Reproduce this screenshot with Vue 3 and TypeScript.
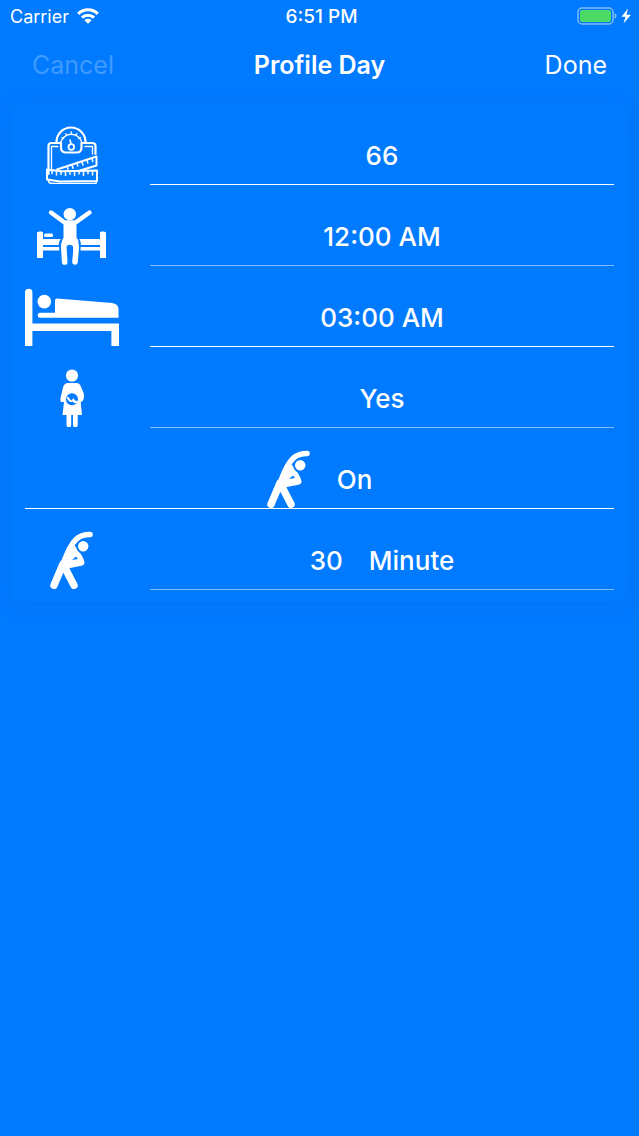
<script setup lang="ts">
import { ref } from 'vue'

const weight = ref('66')
const wakeTime = ref('12:00 AM')
const sleepTime = ref('03:00 AM')
const pregnant = ref('Yes')
const active = ref(true)
const duration = ref(30)
</script>

<template>
  <div class="screen">
    <div class="status">
      <div class="carrier">
        <span>Carrier</span>
        <svg class="wifi" viewBox="0 0 22 16" aria-hidden="true">
          <g fill="none" stroke="#fff" stroke-width="3.1">
            <path d="M1.2 5.8a14 14 0 0 1 19.6 0" />
            <path d="M4.9 9.7a8.7 8.7 0 0 1 12.2 0" />
          </g>
          <path d="M7.4 12.2a5.1 5.1 0 0 1 7.2 0L11 15.800z" fill="#fff" />
        </svg>
      </div>
      <div class="time">6:51 PM</div>
      <div class="power">
        <svg class="battery" viewBox="0 0 56 18" aria-hidden="true">
          <rect x="1" y="1" width="35" height="16" rx="4" fill="none" stroke="#fff" stroke-opacity=".5" stroke-width="1.4" />
          <rect x="3" y="3" width="31" height="12" rx="2" fill="#4cd964" />
          <path d="M37.500 6.200q2 .8 2 2.800t-2 2.800z" fill="#fff" fill-opacity=".5" />
          <path d="M51 1.500 44.500 9.800H48.500L46.500 16.500 54 7.800H49.500z" fill="#fff" />
        </svg>
      </div>
    </div>

    <header class="nav">
      <button type="button" class="nav-btn" disabled>Cancel</button>
      <h1>Profile Day</h1>
      <button type="button" class="nav-btn done">Done</button>
    </header>

    <main class="card">
      <div class="row">
        <label class="icon" for="weight" aria-label="Weight">
          <svg class="pic" viewBox="0 0 94 58" aria-hidden="true">
            <g fill="none" stroke="#fff" stroke-linejoin="round" stroke-linecap="round">
              <path d="M31.500 17V16a14.500 14.500 0 0 1 29 0v1" stroke-width="2.200" />
              <path d="M35.500 17a11 11 0 0 1 21.500 0" stroke-width="1.500" />
              <path d="M46.200 5.500v2.500M40.500 7.500l1.200 2M51.900 7.500l-1.200 2M36.800 11.500l2 1.200M55.600 11.500l-2 1.200" stroke-width="1.200" />
              <path d="M23.500 48V20q0-3 3-3H36v4.500q0 5 5 5h10.500q5 0 5-5V17H67q3.500 0 3.500 3v8" stroke-width="2.200" />
              <path d="M26.500 45V20.500H33M60 20.500h7.500V28" stroke-width="1.300" />
              <circle cx="46.300" cy="21" r="2.800" stroke-width="1.800" />
              <path d="M46 18l-1-4" stroke-width="1.600" />
              <path d="M32 43.500 71.500 30.500v9L55 44.500" stroke-width="2" />
              <path d="M42 40.500l1 2.800M47 39l1 3.200M52 37.300l.8 2.800M57 35.700l1 3.300M62 34l.8 3M67 32.500l.8 3" stroke-width="1.500" />
              <path d="M22 43.500 36 45.300 72 44.500v10.500L35 55.500 22 53.500z" stroke-width="2" />
              <path d="M27 44.500v3M31.500 45v4M36 45.500v3M40.500 45.300v4.200M45 45.200v3M49.500 45v4.500M54 45v3M58.500 44.900v4.500M63 44.800v3M67.500 44.700v4.300" stroke-width="1.500" />
              <path d="M23.500 54.500q0 3 4 3H71v-2" stroke-width="1.600" />
            </g>
          </svg>
        </label>
        <input id="weight" v-model="weight" class="field" type="text" inputmode="numeric" />
      </div>

      <div class="row">
        <label class="icon" for="wake" aria-label="Wake-up time">
          <svg class="pic" viewBox="0 0 94 58" aria-hidden="true">
            <g fill="#fff">
              <path d="M12 26q0-1 1-1h.5V24.500H17V25h1v7h19v6H18v2H38V43.500H18V51H12z" />
              <path d="M81 26q0-1-1-1h-.5V24.500H76V25h-1v7H53v6h22v2H53v3.500h22V51h6z" />
              <rect x="19" y="26.500" width="9" height="3.500" rx="1.500" />
            </g>
            <path d="M39 14h12.500v17q3 2 3.200 6L53.500 54h-6L47 40q-2.500-2-5 0L42.500 54h-6L35 37q.2-4 4-6z" fill="#fff" stroke="#007aff" stroke-width="2.400" />
            <g fill="none" stroke="#fff" stroke-width="5.600" stroke-linecap="round" stroke-linejoin="round">
              <path d="M40.500 36.500Q38.500 38 38.800 41L39.700 55M49.500 36.500Q51.500 38 51.200 41L50 55" />
              <path d="M26 5.500 39.500 15.500h11L64.500 5.500" stroke-width="4.400" />
            </g>
            <path d="M38.500 14h13v17q2 1 2 5H37q0-4 1.500-5z" fill="#fff" />
            <circle cx="44.800" cy="7.200" r="6.200" fill="#fff" />
          </svg>
        </label>
        <input id="wake" v-model="wakeTime" class="field" type="text" />
      </div>

      <div class="row">
        <label class="icon" for="sleep" aria-label="Bedtime">
          <svg class="pic" viewBox="0 0 94 58" aria-hidden="true">
            <g fill="#fff">
              <path d="M0 58V4.500a3.700 3.700 0 0 1 7.400 0v31H94V58h-7.600V43H7.400v15z" />
              <circle cx="19.300" cy="13.600" r="6.800" />
              <path d="M30 24.700V12.500q0-2.200 2.200-2L87 15.100q6.500.6 6.500 6.400v8.200H15.200a2.500 2.500 0 0 1 0-5z" />
            </g>
          </svg>
        </label>
        <input id="sleep" v-model="sleepTime" class="field" type="text" />
      </div>

      <div class="row">
        <label class="icon" for="pregnant" aria-label="Pregnant">
          <svg class="pic" viewBox="0 0 94 58" aria-hidden="true">
            <g fill="#fff">
              <circle cx="47" cy="6.600" r="6.100" />
              <path d="M43 14h8.500q3 0 4.200 3l3 7.500q1 4.500-1 7.500l-2 1 1.300 13h-4.300v10a2.300 2.300 0 0 1-4.700 0V46h-1.800v10a2.300 2.300 0 0 1-4.700 0V46h-4l1.500-13h-3q-1-2-.3-5l2.300-9.500Q39 14 43 14z" />
            </g>
            <circle cx="47" cy="30.300" r="6" fill="#007aff" />
            <path d="M41.500 28q2-1 3 1.500t2.500 1.500l1.500-2 1.500 2.500 2.500.5.500 1.500q-2.500 1.500-4.500 0l-1-1q-3 1.500-4.500-1.500z" fill="#fff" />
          </svg>
        </label>
        <input id="pregnant" v-model="pregnant" class="field" type="text" />
      </div>

      <button type="button" class="row toggle" :aria-pressed="active" @click="active = !active">
        <svg class="stretch" viewBox="0 0 44 58" aria-hidden="true">
          <g fill="none" stroke="#fff" stroke-linecap="round" stroke-linejoin="round">
            <path d="M40 3.500Q31 3.500 26 8.500Q20 14 13.500 32" stroke-width="5.600" />
            <path d="M13 33 4 54.300M13.500 34l10.500 20.300" stroke-width="7.400" />
          </g>
          <path d="M19 16Q22 12 25.500 15.500Q27 20 30.500 22.500Q34 28 34.500 31.500Q34.500 34 31.500 34.700L20 37 12.500 42 11 33z" fill="#fff" />
          <path d="M22 29 26 25.500l2 2.500z" fill="#007aff" />
          <circle cx="33" cy="15.200" r="6.200" fill="#007aff" />
          <circle cx="33.200" cy="15.200" r="5.200" fill="#fff" />
        </svg>
        <span>{{ active ? 'On' : 'Off' }}</span>
      </button>

      <div class="row">
        <div class="icon">
          <svg class="stretch" viewBox="0 0 44 58" aria-hidden="true">
            <g fill="none" stroke="#fff" stroke-linecap="round" stroke-linejoin="round">
              <path d="M40 3.500Q31 3.500 26 8.500Q20 14 13.500 32" stroke-width="5.600" />
              <path d="M13 33 4 54.300M13.500 34l10.500 20.300" stroke-width="7.400" />
            </g>
            <path d="M19 16Q22 12 25.500 15.500Q27 20 30.500 22.500Q34 28 34.500 31.500Q34.500 34 31.500 34.700L20 37 12.500 42 11 33z" fill="#fff" />
            <path d="M22 29 26 25.500l2 2.500z" fill="#007aff" />
            <circle cx="33" cy="15.200" r="6.200" fill="#007aff" />
            <circle cx="33.200" cy="15.200" r="5.200" fill="#fff" />
          </svg>
        </div>
        <button type="button" class="field duration">
          <span>{{ duration }}</span>
          <span>Minute</span>
        </button>
      </div>
    </main>
  </div>
</template>

<style>
html,
body {
  background: #007aff;
}

body {
  margin: 0;
}
</style>

<style scoped>
.screen {
  min-height: 100vh;
  background: #007aff;
  color: #fff;
  font-family: Inter, "Liberation Sans", sans-serif;
}

.status {
  display: grid;
  grid-template-columns: 1fr auto 1fr;
  align-items: center;
  height: 32px;
  padding: 0 6px 0 10px;
  font-size: 18px;
}

.carrier {
  display: flex;
  align-items: center;
  gap: 8px;
}

.wifi {
  width: 22px;
  height: 16px;
}

.time {
  font-size: 19px;
  font-weight: 500;
}

.power {
  display: flex;
  justify-content: flex-end;
}

.battery {
  width: 56px;
  height: 18px;
}

.nav {
  display: grid;
  grid-template-columns: 1fr auto 1fr;
  align-items: center;
  height: 66px;
  padding: 0 32px;
}

.nav h1 {
  margin: 0;
  font-size: 25px;
  font-weight: 600;
}

.nav-btn {
  justify-self: start;
  padding: 0;
  border: 0;
  background: none;
  color: #fff;
  font: inherit;
  font-size: 25px;
}

.nav-btn:disabled {
  color: #3f9bff;
}

.done {
  justify-self: end;
}

.card {
  display: flex;
  flex-direction: column;
  gap: 22px;
  margin: 6px 12px 0;
  padding: 22px 13px 12px;
  border-radius: 8px;
  box-shadow: 0 4px 20px rgba(0, 80, 200, 0.12);
}

.row {
  display: flex;
  gap: 31px;
  height: 59px;
}

.icon {
  display: flex;
  flex: none;
  justify-content: center;
  width: 94px;
}

.pic {
  width: 94px;
  height: 58px;
}

.stretch {
  width: 44px;
  height: 58px;
}

.field,
.toggle {
  box-sizing: border-box;
  padding: 0;
  border: 0;
  border-bottom: 1px solid #fff;
  border-radius: 0;
  outline: 0;
  background: none;
  color: #fff;
  font: inherit;
  font-size: 26px;
  font-weight: 500;
  text-align: center;
}

.field {
  flex: 1;
  min-width: 0;
}

.row:nth-child(even) .field {
  border-bottom-color: #80bcff;
}

.toggle,
.duration {
  display: flex;
  align-items: center;
  justify-content: center;
  gap: 26px;
}
</style>
